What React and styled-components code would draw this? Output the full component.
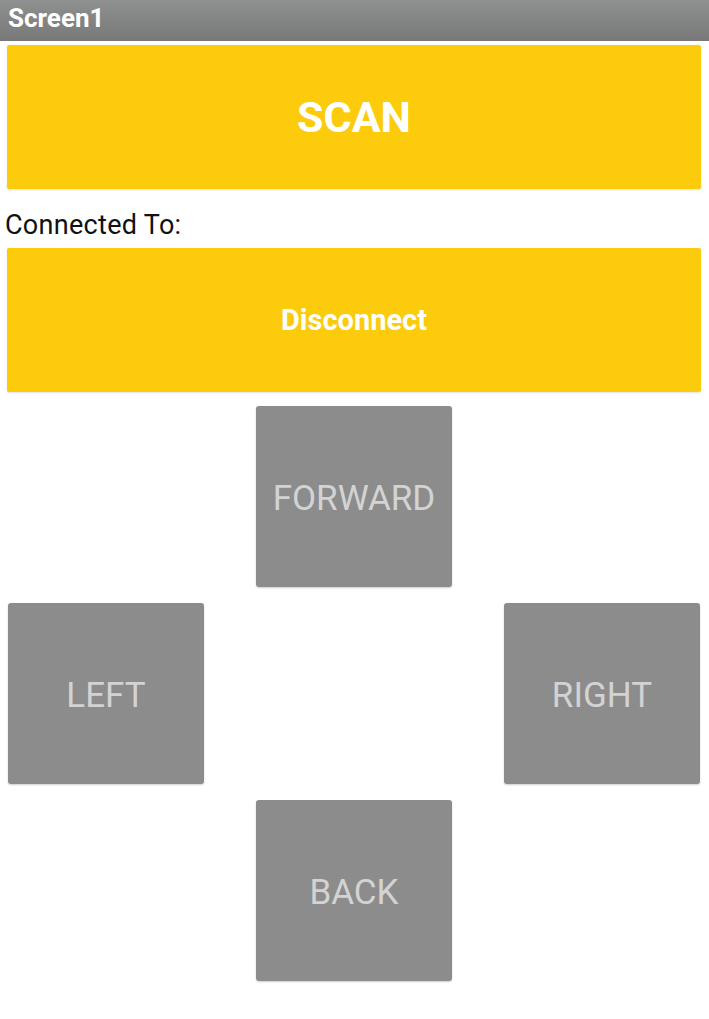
import React from 'react';
import styled, { createGlobalStyle } from 'styled-components';

const Global = createGlobalStyle`
  html, body {
    margin: 0;
    padding: 0;
    background: #fff;
  }
  body {
    font-family: Roboto, "Liberation Sans", sans-serif;
  }
`;

const App = () => {
  return (
    <Screen>
      <Global />
      <TitleBar>Screen1</TitleBar>
      <Body>
        <YellowButton size={43}>SCAN</YellowButton>
        <Label>Connected To:</Label>
        <YellowButton size={29}>Disconnect</YellowButton>
        <Pad>
          <PadButton col={2} row={1}>FORWARD</PadButton>
          <PadButton col={1} row={2}>LEFT</PadButton>
          <PadButton col={3} row={2}>RIGHT</PadButton>
          <PadButton col={2} row={3}>BACK</PadButton>
        </Pad>
      </Body>
    </Screen>
  );
};

export default App;

const Screen = styled.div`
  width: 709px;
  min-height: 1019px;
  background: #fff;
`;

const TitleBar = styled.div`
  height: 41px;
  box-sizing: border-box;
  padding: 2px 0 0 8px;
  background: linear-gradient(#8f9191, #777877);
  color: #fff;
  font-size: 26px;
  font-weight: 700;
  line-height: 32px;
`;

const Body = styled.div`
  display: flex;
  flex-direction: column;
  padding: 4px 8px 0 7px;
`;

const YellowButton = styled.div`
  height: 144px;
  display: flex;
  align-items: center;
  justify-content: center;
  background: #fccb0b;
  color: #fff;
  font-size: ${p => p.size}px;
  font-weight: 700;
  border-radius: 2px;
  box-shadow: 0 1px 2px rgba(0, 0, 0, 0.12);
`;

const Label = styled.div`
  margin: 21px 0 7px -2px;
  font-size: 27px;
  letter-spacing: 0.3px;
  line-height: 31px;
  color: #111;
`;

const Pad = styled.div`
  display: grid;
  grid-template-columns: repeat(3, 196px);
  grid-template-rows: repeat(3, 181px);
  column-gap: 52px;
  row-gap: 16px;
  margin: 14px 0 0 1px;
`;

const PadButton = styled.div`
  grid-column: ${p => p.col};
  grid-row: ${p => p.row};
  display: flex;
  align-items: center;
  justify-content: center;
  padding-top: 3px;
  background: #8c8c8c;
  color: #d3d3d3;
  font-size: 35px;
  border-radius: 3px;
  box-shadow: 0 1px 2px rgba(0, 0, 0, 0.2);
`;
